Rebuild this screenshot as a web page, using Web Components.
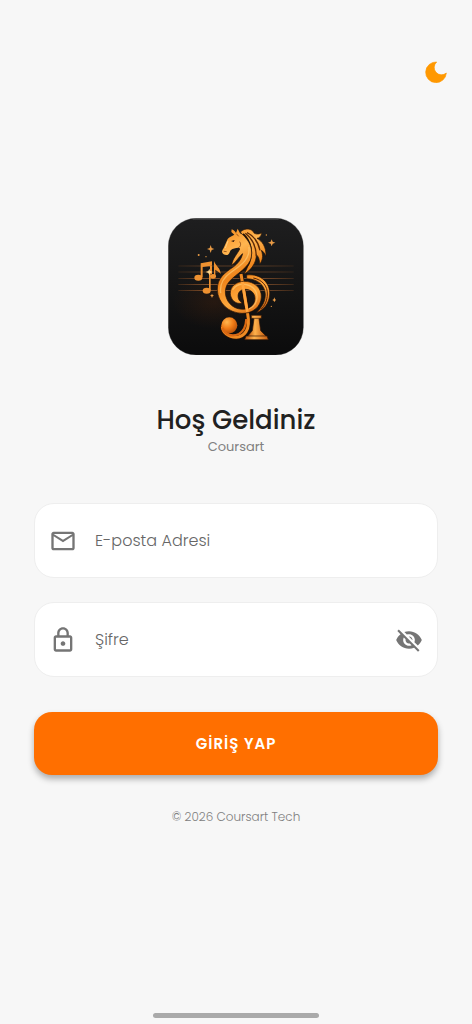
<!DOCTYPE html>
<html lang="tr">
<head>
<meta charset="utf-8">
<meta name="viewport" content="width=device-width, initial-scale=1">
<title>Coursart</title>
<style>
    body {
        margin: 0;
        background: #f7f7f7;
        color: #212121;
        font-family: Poppins, Inter, sans-serif;
    }
</style>
</head>
<body>
<login-page>
    <theme-toggle slot="actions"></theme-toggle>
    <brand-logo slot="logo"></brand-logo>
    <span slot="title">Hoş Geldiniz</span>
    <span slot="subtitle">Coursart</span>
    <text-field type="email" name="email" label="E-posta Adresi" icon="mail"></text-field>
    <text-field type="password" name="password" label="Şifre" icon="lock"></text-field>
    <submit-button>GİRİŞ YAP</submit-button>
    <span slot="footer">© 2026 Coursart Tech</span>
</login-page>

<script>
const ICONS = {
    mail: "M22 6c0-1.1-.9-2-2-2H4c-1.1 0-2 .9-2 2v12c0 1.1.9 2 2 2h16c1.1 0 2-.9 2-2V6zm-2 0l-8 5-8-5h16zm0 12H4V8l8 5 8-5v10z",
    lock: "M18 8h-1V6c0-2.76-2.24-5-5-5S7 3.24 7 6v2H6c-1.1 0-2 .9-2 2v10c0 1.1.9 2 2 2h12c1.1 0 2-.9 2-2V10c0-1.1-.9-2-2-2zM9 6c0-1.66 1.34-3 3-3s3 1.34 3 3v2H9V6zm9 14H6V10h12v10zm-6-3c1.1 0 2-.9 2-2s-.9-2-2-2-2 .9-2 2 .9 2 2 2z",
    eye: "M12 4.5C7 4.5 2.73 7.61 1 12c1.73 4.39 6 7.5 11 7.5s9.27-3.11 11-7.5c-1.73-4.39-6-7.5-11-7.5zM12 17c-2.76 0-5-2.24-5-5s2.24-5 5-5 5 2.24 5 5-2.24 5-5 5zm0-8c-1.66 0-3 1.34-3 3s1.34 3 3 3 3-1.34 3-3-1.34-3-3-3z",
    eyeOff: "M12 7c2.76 0 5 2.24 5 5 0 .65-.13 1.26-.36 1.83l2.92 2.92c1.51-1.26 2.7-2.89 3.43-4.75-1.73-4.39-6-7.5-11-7.5-1.4 0-2.74.25-3.98.7l2.16 2.16C10.74 7.13 11.35 7 12 7zM2 4.27l2.28 2.28.46.46C3.08 8.3 1.78 10.02 1 12c1.73 4.39 6 7.5 11 7.5 1.55 0 3.03-.3 4.38-.84l.42.42L19.73 22 21 20.73 3.27 3 2 4.27zM7.53 9.8l1.55 1.55c-.05.21-.08.43-.08.65 0 1.66 1.34 3 3 3 .22 0 .44-.03.65-.08l1.55 1.55c-.67.33-1.41.53-2.2.53-2.76 0-5-2.24-5-5 0-.79.2-1.53.53-2.2zm4.31-.78l3.15 3.15.02-.16c0-1.66-1.34-3-3-3l-.17.01z"
};

class LoginPage extends HTMLElement {
    constructor() {
        super();
        this.attachShadow({ mode: "open" });
        this.shadowRoot.innerHTML = `
            <style>
                :host {
                    display: flex;
                    flex-direction: column;
                    min-height: 100vh;
                }
                header {
                    display: flex;
                    justify-content: flex-end;
                    padding: 56px 20px 0;
                }
                main {
                    flex: 1;
                    display: flex;
                    flex-direction: column;
                    align-items: center;
                    justify-content: center;
                    padding: 0 34px 56px;
                }
                h1 {
                    margin: 48px 0 0;
                    font-size: 26px;
                    line-height: 34px;
                    font-weight: 500;
                }
                p {
                    margin: 0;
                    font-size: 13px;
                    line-height: 20px;
                    color: #808080;
                }
                form {
                    display: flex;
                    flex-direction: column;
                    gap: 24px;
                    width: 100%;
                    max-width: 480px;
                    margin-top: 46px;
                }
                .copyright {
                    margin-top: 32px;
                    font-size: 12px;
                    font-weight: 300;
                    color: #808080;
                }
                footer {
                    display: flex;
                    justify-content: center;
                    padding-bottom: 6px;
                }
                .home {
                    width: 35%;
                    height: 5px;
                    border-radius: 3px;
                    background: #aaaaaa;
                }
            </style>
            <header><slot name="actions"></slot></header>
            <main>
                <slot name="logo"></slot>
                <h1><slot name="title"></slot></h1>
                <p><slot name="subtitle"></slot></p>
                <form><slot></slot></form>
                <p class="copyright"><slot name="footer"></slot></p>
            </main>
            <footer><div class="home"></div></footer>
        `;
    }
}

class ThemeToggle extends HTMLElement {
    constructor() {
        super();
        this.attachShadow({ mode: "open" });
        this.shadowRoot.innerHTML = `
            <style>
                :host { display: block; }
                button {
                    display: grid;
                    place-items: center;
                    width: 32px;
                    height: 32px;
                    padding: 0;
                    border: 0;
                    background: none;
                    color: #ff9800;
                    cursor: pointer;
                }
                svg { display: block; width: 22px; height: 22px; }
            </style>
            <button type="button" aria-label="Tema">
                <svg viewBox="0 0 66 66" fill="currentColor" stroke="currentColor" stroke-width="2" stroke-linejoin="round">
                    <path d="M35 3A31 31 0 1 0 64 36A21 21 0 0 1 35 3Z"/>
                </svg>
            </button>
        `;
    }
}

class BrandLogo extends HTMLElement {
    constructor() {
        super();
        this.attachShadow({ mode: "open" });
        this.shadowRoot.innerHTML = `
            <style>
                :host { display: block; width: 136px; }
                svg { display: block; width: 100%; }
            </style>
            <svg viewBox="26 22 408 412" role="img" aria-label="Coursart">
                <defs>
                    <linearGradient id="bg" x1="0" y1="0" x2="0" y2="1">
                        <stop offset="0" stop-color="#1e1e1f"/>
                        <stop offset=".5" stop-color="#151515"/>
                        <stop offset="1" stop-color="#0b0b0c"/>
                    </linearGradient>
                    <radialGradient id="glow">
                        <stop offset="0" stop-color="#6b2c08" stop-opacity=".22"/>
                        <stop offset="1" stop-color="#6b2c08" stop-opacity="0"/>
                    </radialGradient>
                    <linearGradient id="gold" x1="180" y1="60" x2="310" y2="310" gradientUnits="userSpaceOnUse">
                        <stop offset="0" stop-color="#f58a1c"/>
                        <stop offset=".25" stop-color="#ffb550"/>
                        <stop offset=".5" stop-color="#ee851c"/>
                        <stop offset=".75" stop-color="#ffa83c"/>
                        <stop offset="1" stop-color="#d4630e"/>
                    </linearGradient>
                    <linearGradient id="base" x1="0" y1="0" x2="1" y2="0">
                        <stop offset="0" stop-color="#b9540d"/>
                        <stop offset=".4" stop-color="#ffb24c"/>
                        <stop offset="1" stop-color="#c25b10"/>
                    </linearGradient>
                    <radialGradient id="ball" cx=".35" cy=".3" r=".8">
                        <stop offset="0" stop-color="#ffb64f"/>
                        <stop offset=".5" stop-color="#ef7b17"/>
                        <stop offset="1" stop-color="#ad4a09"/>
                    </radialGradient>
                    <linearGradient id="staff" x1="55" y1="0" x2="405" y2="0" gradientUnits="userSpaceOnUse">
                        <stop offset="0" stop-color="#a45a25" stop-opacity=".3"/>
                        <stop offset=".25" stop-color="#a0602f"/>
                        <stop offset=".75" stop-color="#8a5630"/>
                        <stop offset="1" stop-color="#a45a25" stop-opacity=".3"/>
                    </linearGradient>
                </defs>
                <rect x="27" y="23" width="405" height="410" rx="83" fill="url(#bg)" stroke="#292929"/>
                <path d="M100 25H358" stroke="#6b6b6b" stroke-width="2"/>
                <ellipse cx="165" cy="275" rx="125" ry="80" fill="url(#glow)"/>

                <!-- staff lines -->
                <path fill="url(#staff)" d="M57 165h346v2H57zM57 183h346v2H57zM57 202h346v2H57zM57 221h346v2H57zM57 239h346v2H57z"/>

                <!-- mane -->
                <g fill="url(#gold)" stroke="#281306" stroke-width="2">
                    <path d="M243 64C258 50 278 53 285 68C293 72 302 70 307 66C306 77 300 82 293 83C308 91 321 108 320 137C316 128 312 122 306 119C313 137 309 151 301 160C301 146 297 137 291 132C291 158 275 178 254 191C278 151 278 106 260 84Z"/>
                </g>
                <path d="M263 66C286 77 297 96 302 119M258 68C279 84 290 107 291 136" fill="none" stroke="#5b2907" stroke-width="4"/>
                <path d="M251 70C273 90 282 124 268 158C258 176 242 184 226 190" fill="none" stroke="#211006" stroke-width="7"/>

                <!-- right outer loop -->
                <path d="M262 193C306 188 334 218 331 253C329 279 314 297 292 306C308 289 319 272 318 249C316 223 295 205 262 204Z" fill="url(#gold)" stroke="#281306" stroke-width="2"/>
                <path d="M282 202C309 207 325 227 324 250C324 270 316 285 305 296" fill="none" stroke="#572508" stroke-width="3"/>

                <!-- stem and ball -->
                <path d="M245 190L265 310C275 359 253 379 231 380C205 379 190 365 189 347" fill="none" stroke="#281306" stroke-width="13"/>
                <path d="M245 190L265 310C275 359 253 379 231 380C205 379 190 365 189 347" fill="none" stroke="#ef8a23" stroke-width="9"/>
                <circle cx="210" cy="344" r="24" fill="url(#ball)"/>
                <path d="M189 352C198 375 220 378 239 370C254 361 260 346 261 325" fill="none" stroke="#d96813" stroke-width="7"/>

                <!-- clef ribbon growing out of the neck -->
                <path d="M217 164C219 144 233 132 243 112L247 72C272 88 284 120 273 149C258 181 219 195 204 221C192 243 199 271 219 286C240 301 271 299 283 279C294 258 281 237 260 236C240 235 231 251 239 268C245 276 249 277 249 277C231 283 214 268 213 249C212 227 231 213 254 212C286 212 307 233 306 259C305 289 279 309 248 308C208 307 176 277 174 238C173 202 197 186 222 169C236 158 246 147 250 129C237 139 231 154 217 164Z" fill="url(#gold)" stroke="#271206" stroke-width="2"/>
                <path d="M269 110C273 147 241 166 216 184C190 202 181 222 184 246M221 236C235 214 271 217 286 237C301 258 290 286 271 294" fill="none" stroke="#ffd07b" stroke-width="4" stroke-linecap="round" opacity=".6"/>
                <path d="M249 214L264 303" stroke="#ffa640" stroke-width="8"/>

                <!-- horse head -->
                <path d="M235 54L242 68C258 75 266 94 260 113L247 129C247 119 243 112 237 111C228 113 221 112 214 119C211 122 212 128 206 132C199 135 190 131 188 124C188 119 192 115 194 110L205 85C209 79 218 77 225 72L216 64L217 56C222 58 226 61 230 67Z" fill="url(#gold)"/>
                <path d="M215 91L226 88L223 94Z" fill="#2a1308"/>
                <path d="M193 122L202 123M231 69L238 77M241 93C247 102 242 110 237 111" fill="none" stroke="#6c3008" stroke-width="2"/>
                <path d="M206 91L198 112" stroke="#ffd181" stroke-width="3"/>

                <!-- chess piece base -->
                <g fill="url(#base)" stroke="#301607" stroke-width="2">
                    <path d="M281 315H302V324H299L304 360L319 375V379H266V375L279 360L284 324H281Z"/>
                    <path d="M276 314H306V323H276ZM260 376H323L327 387H256Z"/>
                </g>

                <!-- notes -->
                <g fill="#ee9130">
                    <path d="M124 158L158 152V165L130 169V200H124ZM152 158H158V190H152ZM149 183H154V239H149Z"/>
                    <path d="M164 197V151C169 166 184 172 184 190C178 181 170 180 168 177V197Z"/>
                    <ellipse cx="117" cy="201" rx="12" ry="9"/>
                    <ellipse cx="142" cy="240" rx="12" ry="9"/>
                    <ellipse cx="161" cy="197" rx="9" ry="7"/>
                </g>

                <!-- sparkles -->
                <g fill="#e99b45">
                    <path d="M154 103l3 9 8 3-8 3-3 9-3-9-8-3 8-3zM337 86l3 7 8 3-8 3-3 8-3-8-8-3 8-3zM345 260l2 6 4 2-4 2-2 5-2-5-4-2 4-2zM158 249l2 4 4 2-4 2-2 5-2-5-4-2 4-2z"/>
                    <circle cx="118" cy="133" r="3"/>
                    <circle cx="140" cy="138" r="2"/>
                    <circle cx="321" cy="73" r="2"/>
                    <circle cx="336" cy="287" r="2"/>
                </g>
                <path d="M150 174l2 7 8 3-8 3-2 7-3-7-8-3 8-3z" fill="#ffd58c"/>
            </svg>
        `;
    }
}

class TextField extends HTMLElement {
    constructor() {
        super();
        this.attachShadow({ mode: "open" });
        this.shadowRoot.innerHTML = `
            <style>
                :host { display: block; }
                .box {
                    display: flex;
                    align-items: center;
                    box-sizing: border-box;
                    height: 75px;
                    padding: 0 14px;
                    border: 1px solid #eeeeee;
                    border-radius: 20px;
                    background: white;
                    color: #757575;
                }
                .box:focus-within { border-color: #ff6f00; }
                svg { display: block; width: 28px; height: 28px; fill: currentColor; }
                input {
                    flex: 1;
                    min-width: 0;
                    height: 48px;
                    padding: 0 18px;
                    border: 0;
                    outline: none;
                    background: none;
                    color: #212121;
                    font: 300 16px/24px Poppins, Inter, sans-serif;
                }
                input::placeholder { color: #666666; opacity: 1; }
                button {
                    padding: 0;
                    border: 0;
                    background: none;
                    color: inherit;
                    cursor: pointer;
                }
            </style>
            <div class="box">
                <label for="input"><svg viewBox="0 0 24 24"><path/></svg></label>
                <input id="input">
            </div>
        `;
    }

    connectedCallback() {
        const label = this.getAttribute("label") || "";
        const type = this.getAttribute("type") || "text";

        this.input = this.shadowRoot.querySelector("input");
        this.input.type = type;
        this.input.name = this.getAttribute("name") || "";
        this.input.placeholder = label;
        this.input.setAttribute("aria-label", label);
        this.shadowRoot.querySelector("path").setAttribute("d", ICONS[this.getAttribute("icon")]);

        if (type === "password" && !this.toggle) {
            this.addToggle();
        }
    }

    addToggle() {
        this.toggle = document.createElement("button");
        this.toggle.type = "button";
        this.toggle.setAttribute("aria-label", "Şifreyi göster");
        this.toggle.innerHTML = `<svg viewBox="0 0 24 24"><path d="${ICONS.eyeOff}"/></svg>`;
        this.toggle.addEventListener("click", () => {
            const hidden = this.input.type === "password";
            this.input.type = hidden ? "text" : "password";
            this.toggle.querySelector("path").setAttribute("d", hidden ? ICONS.eye : ICONS.eyeOff);
        });
        this.shadowRoot.querySelector(".box").appendChild(this.toggle);
    }
}

class SubmitButton extends HTMLElement {
    constructor() {
        super();
        this.attachShadow({ mode: "open" });
        this.shadowRoot.innerHTML = `
            <style>
                :host { display: block; margin-top: 11px; }
                button {
                    display: block;
                    width: 100%;
                    height: 63px;
                    padding: 0;
                    border: 0;
                    border-radius: 18px;
                    background: #ff6f00;
                    box-shadow: 0 4px 6px rgba(0, 0, 0, 0.3);
                    color: white;
                    font: 600 15px/24px Poppins, Inter, sans-serif;
                    letter-spacing: 1px;
                    cursor: pointer;
                }
            </style>
            <button type="button"><slot></slot></button>
        `;
    }
}

customElements.define("login-page", LoginPage);
customElements.define("theme-toggle", ThemeToggle);
customElements.define("brand-logo", BrandLogo);
customElements.define("text-field", TextField);
customElements.define("submit-button", SubmitButton);
</script>
</body>
</html>
